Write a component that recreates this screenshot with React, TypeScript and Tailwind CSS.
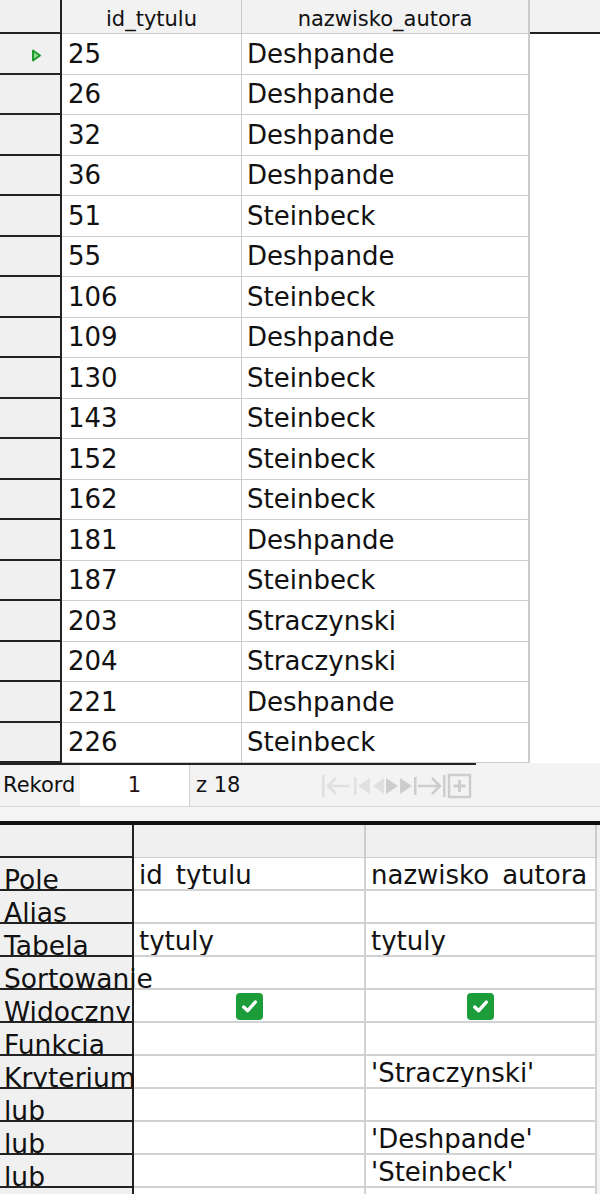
import React from "react";

type Row = { id: number; name: string };

const ROWS: Row[] = [
  { id: 25, name: "Deshpande" },
  { id: 26, name: "Deshpande" },
  { id: 32, name: "Deshpande" },
  { id: 36, name: "Deshpande" },
  { id: 51, name: "Steinbeck" },
  { id: 55, name: "Deshpande" },
  { id: 106, name: "Steinbeck" },
  { id: 109, name: "Deshpande" },
  { id: 130, name: "Steinbeck" },
  { id: 143, name: "Steinbeck" },
  { id: 152, name: "Steinbeck" },
  { id: 162, name: "Steinbeck" },
  { id: 181, name: "Deshpande" },
  { id: 187, name: "Steinbeck" },
  { id: 203, name: "Straczynski" },
  { id: 204, name: "Straczynski" },
  { id: 221, name: "Deshpande" },
  { id: 226, name: "Steinbeck" },
];

type DesignRow = { label: string; a?: string; b?: string; check?: boolean };

const DESIGN: DesignRow[] = [
  { label: "Pole", a: "id_tytulu", b: "nazwisko_autora" },
  { label: "Alias" },
  { label: "Tabela", a: "tytuly", b: "tytuly" },
  { label: "Sortowanie" },
  { label: "Widoczny", check: true },
  { label: "Funkcja" },
  { label: "Kryterium", b: "'Straczynski'" },
  { label: "lub" },
  { label: "lub", b: "'Deshpande'" },
  { label: "lub", b: "'Steinbeck'" },
  { label: "" },
];

function Check() {
  return (
    <div className="w-[27px] h-[27px] rounded-[4px] bg-[#1d9c3a] flex items-center justify-center">
      <svg width="19" height="19" viewBox="0 0 18 18">
        <path d="M3.5 9.5 L7.3 13 L14.5 4.8" fill="none" stroke="#fff" strokeWidth="3.2" strokeLinecap="round" strokeLinejoin="round" />
      </svg>
    </div>
  );
}

function NavIcons() {
  const l = "#e0e0e0";
  const d = "#cdcdcd";
  return (
    <svg width="152" height="30" viewBox="0 0 152 30">
      {/* first */}
      <rect x="2" y="4" width="2.5" height="22" fill={l} />
      <path d="M8 15 H30 M16 7 L8 15 L16 23" fill="none" stroke={l} strokeWidth="2.5" />
      {/* prev */}
      <rect x="34" y="6" width="2.5" height="18" fill={l} />
      <path d="M38 15 L50 7 V23 Z" fill={l} />
      {/* prev / next */}
      <path d="M53 15 L64 7 V23 Z" fill={l} />
      <path d="M78 15 L66 7 V23 Z" fill={d} />
      {/* next */}
      <path d="M92 15 L80 7 V23 Z" fill={d} />
      <rect x="94" y="6" width="2.5" height="18" fill={d} />
      {/* last */}
      <path d="M98 15 H120 M112 7 L120 15 L112 23" fill="none" stroke={d} strokeWidth="2.5" />
      <rect x="123" y="4" width="2.5" height="22" fill={d} />
      {/* new */}
      <rect x="129" y="4" width="21" height="22" fill="none" stroke={d} strokeWidth="2.5" />
      <path d="M139.5 9 V21 M133.5 15 H145.5" fill="none" stroke={d} strokeWidth="3" />
    </svg>
  );
}

// the underscore is cut off by the cell edge in the original grid
function Clipped({ text }: { text: string }) {
  const parts = text.split("_");
  return (
    <>
      {parts.map((p, i) => (
        <React.Fragment key={i}>
          {i > 0 && <span className="text-transparent">_</span>}
          {p}
        </React.Fragment>
      ))}
    </>
  );
}

function DesignCell({ text, check, w }: { text?: string; check?: boolean; w: string }) {
  if (check) {
    return (
      <div className={`${w} shrink-0 bg-white border-r-2 border-b-2 border-[#d2d2d2] flex items-center justify-center pt-[2px]`}>
        <Check />
      </div>
    );
  }
  return (
    <div className={`${w} shrink-0 bg-white border-r-2 border-b-2 border-[#d2d2d2] overflow-hidden flex items-end pl-[5px] pb-[1px]`}>
      <span className="whitespace-nowrap text-[26px] leading-[26px]">{text && <Clipped text={text} />}</span>
    </div>
  );
}

export default function App() {
  return (
    <div className="w-[600px] h-[1194px] overflow-hidden bg-white font-['DejaVu_Sans',sans-serif] text-[#111]">
      {/* result grid */}
      <div className="flex h-[34px]">
        <div className="w-[62px] shrink-0 bg-[#f0f0f0] border-r-2 border-b-2 border-[#222]" />
        <div className="w-[180px] shrink-0 bg-[#f2f2f2] border-r border-b border-[#cccccc] flex items-end justify-center pb-[3px] text-[21px] leading-[21px]">
          id_tytulu
        </div>
        <div className="w-[288px] shrink-0 bg-[#f2f2f2] border-r-2 border-b border-[#cccccc] flex items-end justify-center pb-[3px] text-[21px] leading-[21px]">
          nazwisko_autora
        </div>
        <div className="flex-1 bg-[#f2f2f2] border-b-2 border-[#222]" />
      </div>

      {ROWS.map((r, i) => (
        <div key={r.id} className="flex h-[40.5px]">
          <div className="w-[62px] shrink-0 bg-[#f0f0f0] border-r-2 border-b-2 border-[#222] flex items-center pl-[31px]">
            {i === 0 && (
              <svg width="11" height="13" viewBox="0 0 11 13" className="mt-[4px]">
                <path d="M2 1.5 L9 6.5 L2 11.5 Z" fill="#8fd88f" stroke="#1c9a2e" strokeWidth="2" strokeLinejoin="round" />
              </svg>
            )}
          </div>
          <div className="w-[180px] shrink-0 border-r border-b border-[#cccccc] flex items-center pl-[6px] text-[26px] leading-none">
            {r.id}
          </div>
          <div className="w-[288px] shrink-0 border-r-2 border-b border-[#cccccc] flex items-center pl-[5px] text-[26px] leading-none">
            {r.name}
          </div>
          <div className="flex-1" />
        </div>
      ))}

      {/* record bar */}
      <div className="flex h-[2px]">
        <div className="w-[476px] bg-[#222]" />
        <div className="flex-1 bg-[#f3f3f3]" />
      </div>
      <div className="flex h-[42px] bg-[#f3f3f3] border-b border-[#d6d6d6] text-[21px]">
        <div className="w-[80px] flex items-center pl-[3px]">Rekord</div>
        <div className="w-[110px] bg-white border-r border-[#d0d0d0] flex items-center justify-center text-[#2a1010]">1</div>
        <div className="w-[130px] flex items-center pl-[6px]">z 18</div>
        <div className="flex items-center">
          <NavIcons />
        </div>
      </div>
      <div className="h-[14px] bg-[#f5f5f5]" />
      <div className="h-[4px] bg-[#111]" />

      {/* design grid */}
      <div className="flex h-[33px]">
        <div className="w-[134px] shrink-0 bg-[#f0f0f0] border-r-2 border-b-2 border-[#222]" />
        <div className="w-[232px] shrink-0 bg-[#f0f0f0] border-r-2 border-b border-[#cccccc]" />
        <div className="w-[231px] shrink-0 bg-[#f0f0f0] border-r-2 border-b border-[#cccccc]" />
        <div className="flex-1 bg-[#f0f0f0]" />
      </div>
      {DESIGN.map((d, i) => (
        <div key={i} className="flex h-[33px] overflow-hidden">
          <div className="w-[134px] shrink-0 bg-[#f0f0f0] border-r-2 border-b-2 border-[#222] flex items-end pl-[4px] relative z-10">
            <span className="whitespace-nowrap text-[26.5px] leading-[26px] -mb-[4px]">{d.label}</span>
          </div>
          <DesignCell w="w-[232px]" text={d.a} check={d.check} />
          <DesignCell w="w-[231px]" text={d.b} check={d.check} />
          <div className="flex-1 bg-[#f5f5f5]" />
        </div>
      ))}
    </div>
  );
}
